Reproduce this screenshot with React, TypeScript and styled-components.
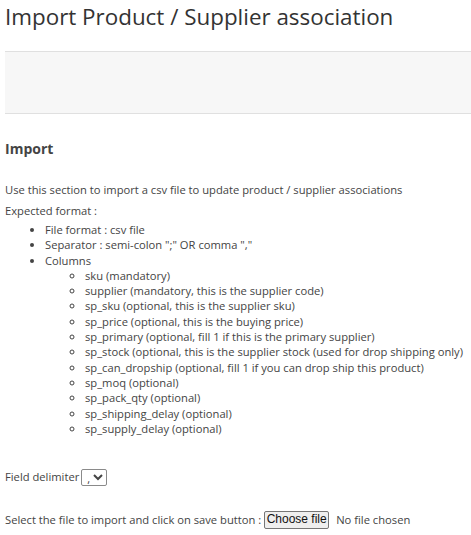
import styled, { createGlobalStyle } from 'styled-components';

const GlobalStyle = createGlobalStyle`
  body {
    margin: 0;
    background: #ffffff;
    font-family: "Open Sans", "DejaVu Sans", sans-serif;
    color: #444444;
  }
`;

const columns = [
  'sku (mandatory)',
  'supplier (mandatory, this is the supplier code)',
  'sp_sku (optional, this is the supplier sku)',
  'sp_price (optional, this is the buying price)',
  'sp_primary (optional, fill 1 if this is the primary supplier)',
  'sp_stock (optional, this is the supplier stock (used for drop shipping only)',
  'sp_can_dropship (optional, fill 1 if you can drop ship this product)',
  'sp_moq (optional)',
  'sp_pack_qty (optional)',
  'sp_shipping_delay (optional)',
  'sp_supply_delay (optional)',
];

const App = () => {
  return (
    <>
      <GlobalStyle />
      <Page>
        <Title>Import Product / Supplier association</Title>
        <InfoBox />
        <SectionTitle>Import</SectionTitle>
        <Intro>Use this section to import a csv file to update product / supplier associations</Intro>
        <Label>Expected format :</Label>
        <FormatList>
          <li>File format : csv file</li>
          <li>Separator : semi-colon ";" OR comma ","</li>
          <li>
            Columns
            <ColumnList>
              {columns.map((col, index) => (
                <li key={index}>{col}</li>
              ))}
            </ColumnList>
          </li>
        </FormatList>
        <FieldRow>
          Field delimiter
          <Select defaultValue=",">
            <option value=",">,</option>
            <option value=";">;</option>
          </Select>
        </FieldRow>
        <FileRow>
          Select the file to import and click on save button :
          <FilePicker>
            <HiddenInput type="file" />
            <FileButton>Choose file</FileButton>
            <NoFile>No file chosen</NoFile>
          </FilePicker>
        </FileRow>
      </Page>
    </>
  );
};

const Page = styled.div`
  padding: 0 0 0 5px;
  font-size: 11.2px;
  line-height: 1.3;
  white-space: nowrap;
`;

const Title = styled.h1`
  margin: 0;
  padding-top: 3px;
  font-size: 22.4px;
  font-weight: 400;
  line-height: 28px;
  color: #333333;
`;

const InfoBox = styled.div`
  margin-top: 20px;
  height: 61px;
  background: #f7f7f7;
  border-top: 1px solid #e0e0e0;
  border-bottom: 1px solid #e0e0e0;
`;

const SectionTitle = styled.h2`
  margin: 26px 0 0;
  font-size: 14px;
  font-weight: 700;
  line-height: 18px;
`;

const Intro = styled.p`
  margin: 24px 0 0;
  line-height: 16px;
`;

const Label = styled.p`
  margin: 5px 0 0;
  line-height: 16px;
`;

const FormatList = styled.ul`
  margin: 3px 0 0;
  padding-left: 40px;
  list-style: disc;

  li {
    line-height: 15.3px;
  }
`;

const ColumnList = styled.ul`
  margin: 0;
  padding-left: 40px;
  list-style: circle;
`;

const FieldRow = styled.div`
  margin-top: 33px;
  display: flex;
  align-items: center;
  gap: 2px;
`;

const Select = styled.select`
  font-family: "Open Sans", sans-serif;
  font-size: 11.2px;
  height: 17px;
  padding: 0 0 0 1px;
  border: 1px solid #8a8a8a;
  border-radius: 2px;
  color: #444444;
  background: #ffffff;
`;

const FileRow = styled.div`
  margin-top: 25px;
  display: flex;
  align-items: center;
  gap: 3px;
`;

const FilePicker = styled.label`
  display: inline-flex;
  align-items: center;
  gap: 7px;
  cursor: pointer;
`;

const HiddenInput = styled.input`
  display: none;
`;

const FileButton = styled.span`
  display: inline-flex;
  align-items: center;
  justify-content: center;
  width: 65px;
  height: 18px;
  box-sizing: border-box;
  font-family: "Liberation Sans", Arial, sans-serif;
  font-size: 12px;
  color: #111111;
  background: #efefef;
  border: 1px solid #767676;
  border-radius: 2px;
`;

const NoFile = styled.span`
  font-size: 11.2px;
`;

export default App;
